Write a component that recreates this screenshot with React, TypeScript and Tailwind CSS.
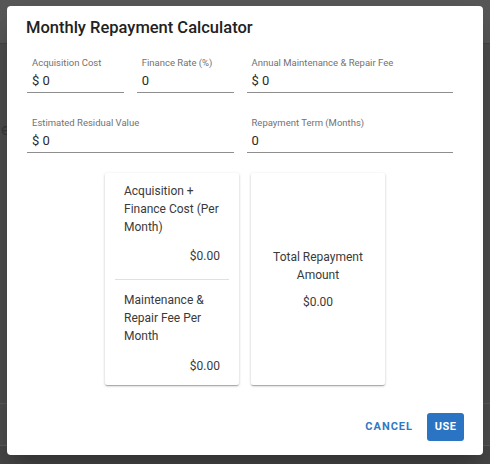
import React from 'react';

const font = { fontFamily: 'Roboto, "Liberation Sans", sans-serif' };

interface FieldProps {
  label: string;
  value: string;
  className?: string;
}

const Field: React.FC<FieldProps> = ({ label, value, className }) => (
  <div className={`flex flex-col border-b border-[#8e8e8e] ${className ?? ''}`}>
    <span className="text-[9.5px] leading-[14px] text-[#727272] pl-[5px] whitespace-nowrap">{label}</span>
    <span className="text-[13px] leading-[22px] text-[#2a2a2a] pl-[5px]">{value}</span>
  </div>
);

const App: React.FC = () => {
  return (
    <div className="relative w-[490px] h-[464px] overflow-hidden bg-[#4d4d4d]" style={font}>
      {/* page behind the overlay */}
      <div className="flex flex-col h-full">
        <div className="h-[44px] bg-[#575757] border-b border-[#444]"></div>
        <div className="h-[78px]"></div>
        <div className="text-[16px] leading-[16px] text-[#3a3a3a] pl-[1px]">e</div>
        <div className="flex-1"></div>
        <div className="h-[42px] border-t border-[#5a5a5a]"></div>
        <div className="h-[19px] border-t border-[#5c5c5c] bg-[#474747]"></div>
      </div>

      {/* dialog */}
      <div className="absolute left-[7px] top-[6px] w-[476px] h-[449px] bg-white rounded-[4px] shadow-[0_11px_15px_-7px_rgba(0,0,0,0.2),0_24px_38px_3px_rgba(0,0,0,0.14)] flex flex-col">
        <h2 className="pl-[19px] pt-[10px] text-[16.5px] leading-[24px] font-medium text-[#222]">
          Monthly Repayment Calculator
        </h2>

        <div className="grid grid-cols-4 gap-x-[13px] gap-y-[23px] pl-[20px] pr-[30px] mt-[16px]">
          <Field label="Acquisition Cost" value="$ 0" />
          <Field label="Finance Rate (%)" value="0" />
          <Field label="Annual Maintenance & Repair Fee" value="$ 0" className="col-span-2" />
          <Field label="Estimated Residual Value" value="$ 0" className="col-span-2" />
          <Field label="Repayment Term (Months)" value="0" className="col-span-2" />
        </div>

        <div className="flex justify-center gap-[12px] mt-[20px]">
          <div className="w-[134px] h-[212px] bg-white rounded-[2px] shadow-[0_1px_3px_rgba(0,0,0,0.2),0_1px_1px_rgba(0,0,0,0.14),0_2px_1px_-1px_rgba(0,0,0,0.12)] px-[10px] flex flex-col text-[12px] leading-[18px] text-[#3a3a3a]">
            <div className="px-[9px] pt-[9px] pb-[14px] flex flex-col">
              <span>Acquisition + Finance Cost (Per Month)</span>
              <span className="self-end mt-[11px]">$0.00</span>
            </div>
            <div className="h-px bg-[#e0e0e0]"></div>
            <div className="px-[9px] pt-[11px] flex flex-col">
              <span>Maintenance &amp; Repair Fee Per Month</span>
              <span className="self-end mt-[12px]">$0.00</span>
            </div>
          </div>
          <div className="w-[134px] h-[212px] bg-white rounded-[2px] shadow-[0_1px_3px_rgba(0,0,0,0.2),0_1px_1px_rgba(0,0,0,0.14),0_2px_1px_-1px_rgba(0,0,0,0.12)] px-[16px] flex flex-col justify-center items-center text-center text-[12px] leading-[18px] text-[#3a3a3a]">
            <span>Total Repayment Amount</span>
            <span className="mt-[9px]">$0.00</span>
          </div>
        </div>

        <div className="flex-1"></div>
        <div className="flex justify-end items-center gap-[6px] pr-[19px] pb-[14px]">
          <button className="h-[28px] px-[8px] text-[11px] font-bold tracking-[1px] text-[#3079c4]">CANCEL</button>
          <button className="h-[28px] w-[37px] rounded-[3px] bg-[#2b73c3] text-[11px] font-bold tracking-[0.5px] text-white">USE</button>
        </div>
      </div>
    </div>
  );
};

export default App;
